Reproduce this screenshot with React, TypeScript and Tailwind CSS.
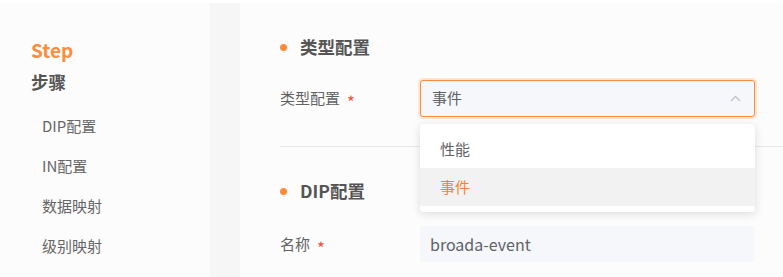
import React from "react";

const font = { fontFamily: '"Noto Sans CJK SC", "Noto Sans", sans-serif' };

function Heading({ text }: { text: string }) {
  return (
    <div className="flex h-[22px] items-center">
      <span className="ml-[40px] h-[7px] w-[7px] rounded-full bg-[#fb8c3c]" />
      <span className="ml-[13px] text-[17.5px] font-bold leading-[22px] text-[#555]">{text}</span>
    </div>
  );
}

function Label({ text }: { text: string }) {
  return (
    <div className="flex w-[180px] shrink-0 items-center pl-[40px] text-[15px] text-[#606266]">
      <span>{text}</span>
      <span className="ml-[7px] translate-y-[3px] text-[17px] leading-none text-[#f5533d]">*</span>
    </div>
  );
}

export default function App() {
  return (
    <div className="flex h-[277px] w-[783px] overflow-hidden bg-white pt-[3px]" style={font}>
      <aside className="w-[210px] shrink-0 bg-[#fcfcfc] pl-[31px] pt-[34px]">
        <div className="text-[19px] font-bold leading-[26px] text-[#fb8c3c]">Step</div>
        <div className="mt-[7px] text-[17.5px] font-bold leading-[24px] text-[#555]">步骤</div>
        <ul className="mt-[22px] pl-[11px] text-[15px] text-[#666]">
          <li className="h-[40px] leading-[20px]">DIP配置</li>
          <li className="h-[40px] leading-[20px]">IN配置</li>
          <li className="h-[40px] leading-[20px]">数据映射</li>
          <li className="h-[40px] leading-[20px]">级别映射</li>
        </ul>
      </aside>
      <div className="w-[30px] shrink-0 bg-[#f6f6f6]" />
      <main className="relative flex-1 bg-[#fcfcfc] pt-[33px]">
        <Heading text="类型配置" />
        <div className="mt-[22px] flex h-[37px]">
          <Label text="类型配置" />
          <div className="relative w-[335px]">
            <div className="flex h-[37px] items-center justify-between rounded-[3px] border border-[#fb8c3c] bg-[#f5f7fa] pl-[11px] pr-[13px] text-[15px] text-[#606266] shadow-[0_0_0_2px_#ffe4d1]">
              <span>事件</span>
              <svg width="11" height="7" viewBox="0 0 11 7" fill="none">
                <path d="M1 6 L5.5 1.5 L10 6" stroke="#c0c4cc" strokeWidth="1.4" />
              </svg>
            </div>
            <div className="absolute left-0 top-[44px] z-10 w-[335px] rounded-[4px] bg-white py-[6px] shadow-[0_2px_10px_rgba(0,0,0,0.13)]">
              <div className="flex h-[38px] items-center pl-[20px] text-[15px] text-[#606266]">性能</div>
              <div className="flex h-[38px] items-center bg-[#f2f2f2] pl-[20px] text-[15px] text-[#fb8030]">事件</div>
            </div>
          </div>
        </div>
        <div className="ml-[40px] mt-[29px] h-px bg-[#e8e8e8]" />
        <div className="mt-[33px]">
          <Heading text="DIP配置" />
        </div>
        <div className="mt-[24px] flex h-[36px]">
          <Label text="名称" />
          <div className="flex w-[335px] items-center rounded-[3px] bg-[#f5f7fa] pl-[10px] text-[16px] text-[#606266]">
            broada-event
          </div>
        </div>
      </main>
    </div>
  );
}
